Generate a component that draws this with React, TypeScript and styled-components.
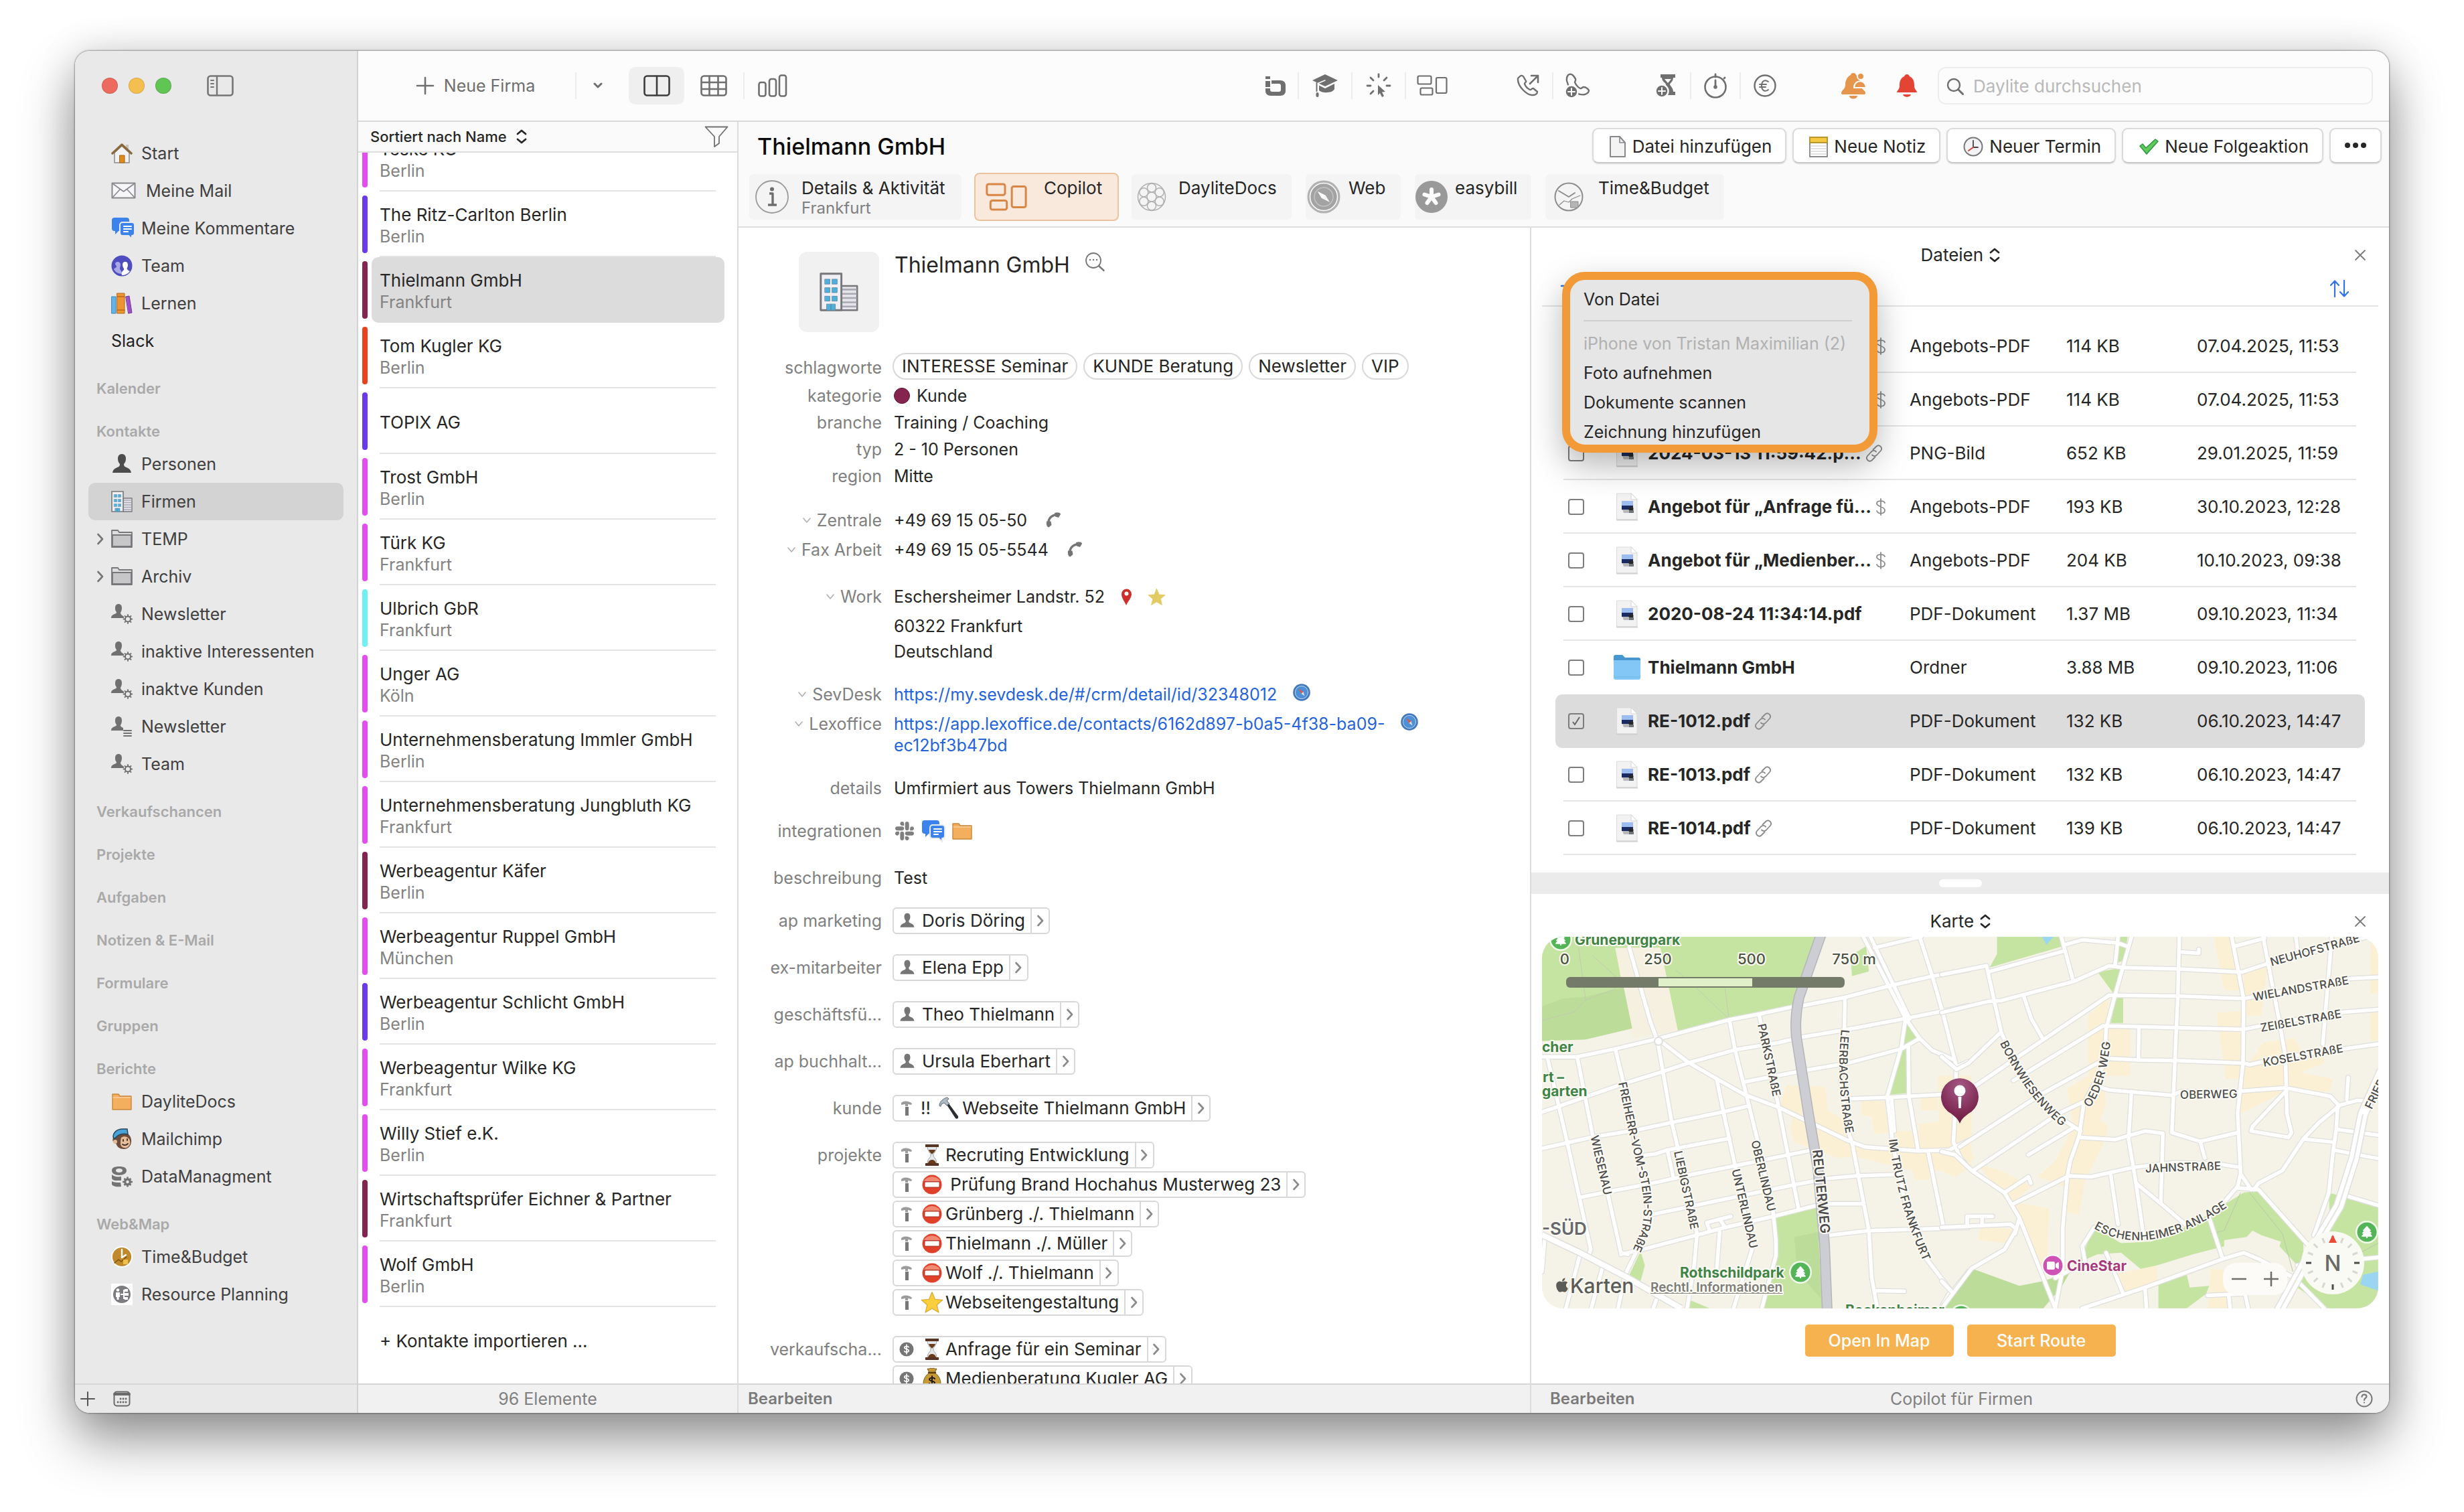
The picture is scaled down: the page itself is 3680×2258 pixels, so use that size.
import React from 'react';
import styled, { createGlobalStyle, css } from 'styled-components';
import { FaApple, FaSlack, FaTree, FaVideo } from 'react-icons/fa6';

const Global = createGlobalStyle`
  * { box-sizing: border-box; }
  body { margin: 0; background: #fff; }
  body, button, input, select, table {
    font-family: Inter, "Liberation Sans", sans-serif;
    font-size: 25px; line-height: 32px; color: #262626;
  }
  button, select, input { border: 0; background: none; padding: 0; margin: 0; }
  svg { display: block; flex: none; }
`;

/* ---------- shared shapes ---------- */

type IconProps = { w: number; h?: number; vb?: string; children: React.ReactNode; color?: string };
const Icon = ({ w, h = w, vb, children, color = '#6f6f6f' }: IconProps) => (
  <svg width={w} height={h} viewBox={vb || `0 0 ${w} ${h}`} fill="none" stroke={color} strokeWidth={3} strokeLinecap="round" strokeLinejoin="round" aria-hidden="true">
    {children}
  </svg>
);

const personPath = 'M16 1c4 0 6 3 6 7 0 3-1 6-3 8 0 3 1 4 4 5 4 2 6 3 7 8H2c1-5 3-6 7-8 3-1 4-2 4-5-2-2-3-5-3-8 0-4 2-7 6-7Z';
const Person = ({ size = 32, color = '#4c4c4c' }) => (
  <Icon w={size} vb="0 0 32 32"><path d={personPath} fill={color} stroke="none" /></Icon>
);
const PersonGear = () => (
  <Icon w={32} vb="0 0 32 32" color="#707070">
    <path d="M11 1c3 0 5 2 5 6 0 3-1 5-2 7 0 3 3 4 5 6v2H0c0-4 3-5 5-6 2-1 3-1 3-3-2-2-2-4-2-6 0-4 2-6 5-6Z" fill="#707070" stroke="none" />
    <circle cx="25" cy="23.500" r="4" strokeWidth="2" />
    <path d="M25 17v2M25 28v2M18.500 23.500h2M29.500 23.500h2M20.500 19l1.200 1.200M28.300 26.800l1.200 1.200M29.500 19l-1.200 1.200M21.700 26.800l-1.200 1.200" strokeWidth="1.800" />
  </Icon>
);
const PersonList = () => (
  <Icon w={32} vb="0 0 32 32" color="#707070">
    <path d="M11 1c3 0 5 2 5 6 0 3-1 5-2 7 0 3 3 3 4 4v4H0c0-4 3-5 5-6 2-1 3-1 3-3-2-2-2-4-2-6 0-4 2-6 5-6Z" fill="#707070" stroke="none" />
    <path d="M19 22h11M19 26h11M19 30h11" strokeWidth="2" />
  </Icon>
);
const Building = ({ size = 32 }) => (
  <Icon w={size} vb="0 0 32 32" color="#77777b">
    <rect x="18" y="11" width="13" height="20" fill="#e4e4ea" strokeWidth="1.400" />
    <path d="M19 14h11M19 17.500h11M19 21h11M19 24.500h11M19 28h11" strokeWidth="1.400" stroke="#a9a9b3" />
    <rect x="1" y="1" width="17" height="30" fill="#f0f0f4" strokeWidth="1.600" />
    <g fill="#4fb0dd" stroke="#5d8ba3" strokeWidth=".5">
      <path d="M4.500 5.500h4v4h-4zM10.500 5.500h4v4h-4zM4.500 12.500h4v4h-4zM10.500 12.500h4v4h-4zM4.500 19.500h4v4h-4zM10.500 19.500h4v4h-4zM6 26h3.500v5H6zM9.500 26H13v5H9.500z" />
    </g>
  </Icon>
);
const Comments = ({ size = 36 }) => (
  <Icon w={size} vb="0 0 36 36">
    <path d="M5 2h18a4 4 0 0 1 4 4v16H11l-5 5v-5H5a4 4 0 0 1-4-4V6a4 4 0 0 1 4-4Z" fill="#3b82ea" stroke="none" />
    <path d="M17 9h14a4 4 0 0 1 4 4v12a4 4 0 0 1-4 4v5l-5-5h-9a4 4 0 0 1-4-4V13a4 4 0 0 1 4-4Z" fill="#3b82ea" stroke="#e9e9e9" strokeWidth="2" />
    <path d="M19 15h11M19 19h11M19 23h6" stroke="#fff" strokeWidth="2.200" />
  </Icon>
);
const Folder = ({ size = 32, fill = '#f3af5e', edge = '#c9873a' }) => (
  <Icon w={size} vb="0 0 32 32" color={edge}>
    <path d="M2 28V5h9l2 3h17v20Z" fill={fill} strokeWidth="1.400" />
    <path d="M3 10h26" strokeWidth="1" stroke="#fff" opacity=".6" />
  </Icon>
);
const OutlineFolder = () => (
  <Icon w={32} vb="0 0 32 32" color="#77777b">
    <path d="M1 28V3h9l2 3h19v22Z" fill="#dedede" strokeWidth="1.800" />
    <path d="M2 10h28v17H2Z" fill="#c6c6c8" strokeWidth="1.800" />
  </Icon>
);
const ChevronRight = ({ w = 10, h = 18, color = '#777' }) => (
  <Icon w={w} h={h} vb="0 0 10 18" color={color}><path d="M1.500 2 8 9l-6.500 7" strokeWidth="2.600" /></Icon>
);
const UpDown = () => (
  <Icon w={16} h={22} vb="0 0 16 22" color="#262626"><path d="m2 7 6-5 6 5M2 15l6 5 6-5" strokeWidth="2.800" /></Icon>
);
const Close = () => (
  <Icon w={18} color="#7a7a7a"><path d="m2 2 14 14M16 2 2 16" strokeWidth="1.800" /></Icon>
);
const Handset = () => (
  <Icon w={22} h={24} vb="0 0 22 24" color="#757575">
    <path d="M4 18C3 10 8 4 17 3.500" strokeWidth="3.400" />
    <path d="M1 13.500h6.500L8.500 19 4.500 22.500C1 22.500.5 17 1 13.500ZM13 1c4-1.500 9-1 9 2l-3 5-5-1.500Z" fill="#757575" stroke="none" />
  </Icon>
);
const Hourglass = ({ w = 28 }) => (
  <Icon w={w} h={34} vb="0 0 28 34">
    <path d="M7 4c0 8 5 9 5 13s-5 5-5 13h14c0-8-5-9-5-13s5-5 5-13Z" fill="#e3e7ea" stroke="#9aa0a5" strokeWidth="1" />
    <path d="M9 9h10c-1 4-4 5-5 7-1-2-4-3-5-7ZM8 29c1-4 4-5 6-5s5 1 6 5Z" fill="#6b3c1c" stroke="none" />
    <path d="M4 1h20v4H4zM4 29h20v4H4z" fill="#5a3423" stroke="none" />
  </Icon>
);
const Stop = () => (
  <Icon w={34} h={32} vb="-2 -1 34 32">
    <circle cx="15" cy="15" r="14.500" fill="#e0412a" stroke="none" />
    <path d="M3 10c4-9 20-9 24 0Z" fill="#f08a72" stroke="none" />
    <rect x="4" y="11" width="22" height="8" rx="1" fill="#fff" stroke="#8d2a1c" strokeWidth=".8" />
  </Icon>
);
const Star = ({ size = 30, fill = '#f9cf3d', edge = '#dca52a' }) => (
  <Icon w={size} vb="0 0 30 30" color={edge}>
    <path d="m15 1.500 4 9.500 10 .8-7.600 6.500 2.400 10L15 23l-8.800 5.300 2.400-10L1 11.800l10-.8Z" fill={fill} strokeWidth="1" />
  </Icon>
);
const HammerColor = () => (
  <Icon w={34} h={34} vb="0 0 34 34">
    <path d="m14 12 3-2 14 19c1 3-2 5-4 3Z" fill="#2b2f33" stroke="none" />
    <path d="M3 13c0-6 6-11 12-12l2 2-3 3 4 4-4 3-4-4-4 2-1 3Z" fill="#aeb9c3" stroke="#5d6a75" strokeWidth="1" />
  </Icon>
);
const MoneyBag = () => (
  <Icon w={34} h={34} vb="-3 0 34 34">
    <path d="M10 8 7 2c3 1 4-2 7 0 3-2 4 1 7 0l-3 6c7 5 9 11 9 17 0 6-4 8-13 8S1 31 1 25c0-6 2-12 9-17Z" fill="#c79a38" stroke="#7c5a17" strokeWidth="1" />
    <path d="M9 8h10" stroke="#5a3f0d" strokeWidth="2.500" />
    <path d="M18 17c-1-2-8-2-8 1s8 2 8 5-7 3-8 1M14 13v14" stroke="#1e1a10" strokeWidth="2" />
  </Icon>
);
const HammerGray = () => (
  <Icon w={22} h={26} vb="0 0 22 24">
    <path d="M3 7V4c4-4 12-3 16 1l-1 2-5-1v3H9V6Z" fill="#9b9b9b" stroke="none" />
    <path d="M9 10h5v13H9Z" fill="#777" stroke="none" />
  </Icon>
);
const Dollar = () => (
  <Icon w={22} vb="0 0 24 24">
    <circle cx="12" cy="12" r="11.500" fill="#757575" stroke="none" />
    <path d="M15.500 8.500c-1-2-7-2-7 .8 0 3 7 2 7 5 0 3-6 3-7 .8M12 4.500v15" stroke="#fff" strokeWidth="1.800" />
  </Icon>
);
const Compass = ({ size = 50, rim = '#b2b2b2', face = '#a3a3a3', needle = '#fff' }) => (
  <Icon w={size} vb="0 0 50 50">
    <circle cx="25" cy="25" r="24.500" fill={rim} stroke="none" />
    <circle cx="25" cy="25" r="20.500" fill={face} stroke="#fff" strokeWidth="1.500" />
    <circle cx="25" cy="25" r="14" stroke="#fff" strokeOpacity=".35" strokeWidth="1.500" />
    <path d="m16 17 12 6 6 10-12-6Z" fill="#f5f5f5" stroke="none" />
    <path d="m16 17 12 6-6 4Z" fill={needle} stroke="none" />
  </Icon>
);
const BrowserMark = () => (
  <Icon w={26} vb="0 0 26 26">
    <circle cx="13" cy="13" r="11.500" fill="#4f8fd6" stroke="#4277ba" strokeWidth="2.600" />
    <circle cx="13" cy="13" r="9.600" stroke="#d5e4f5" strokeWidth=".8" />
    <path d="m8.500 7.500 7 4.500-3 3Z" fill="#e5563f" stroke="none" />
    <path d="m17.500 18.500-5-3.500 3-3Z" fill="#d8dde4" stroke="none" />
  </Icon>
);
const LinkMark = () => (
  <Icon w={26} h={26} vb="0 0 26 26" color="#8a8a8a">
    <path d="m11.500 7.500 5-5c4-3.500 10 2 6.500 6.500l-6 6.500c-2 2-5 2-7 0" strokeWidth="1.800" />
    <path d="m14.500 18.500-5 5c-4 3.500-10-2-6.500-6.500l6-6.500c2-2 5-2 7 0" strokeWidth="1.800" />
  </Icon>
);
const DollarMark = () => (
  <Icon w={16} h={30} vb="0 0 16 30" color="#8a8a8a">
    <path d="M14 9C12 5 2 5 2 10s12 4 12 10-10 6-12 1M8 3v24" strokeWidth="1.800" />
  </Icon>
);
const DocIcon = () => (
  <Icon w={34} h={42} vb="0 0 34 42">
    <path d="M2 1h21l9 9v30H2Z" fill="#f2f2f2" stroke="#d9d9d9" strokeWidth="1" />
    <path d="M23 1v9h9Z" fill="#fff" stroke="#d5d5d5" strokeWidth="1" />
    <path d="M9 12h17v8H9Z" fill="#9dbcf0" stroke="none" />
    <path d="M9 19h17v6H9Z" fill="#1b2b63" stroke="none" />
    <path d="M10 25h11l2 5H12Z" fill="#b8b8b8" stroke="none" />
    <circle cx="23" cy="24" r="3.500" fill="#26282c" stroke="none" />
    <path d="M20 26h7v4h-7Z" fill="#70757c" stroke="none" />
    <path d="M2 40.500h30" stroke="#cfcfcf" strokeWidth="2" />
  </Icon>
);
const BlueFolder = () => (
  <Icon w={40} h={38} vb="0 0 40 38">
    <path d="M0 34V3c0-2 1-3 3-3h10l4 4h20c2 0 3 1 3 3v27Z" fill="#4697cf" stroke="none" />
    <path d="M0 8h40v26c0 2-1 3-3 3H3c-2 0-3-1-3-3Z" fill="#82c7f5" stroke="none" />
    <path d="M1 33h38" stroke="#6eb6e6" strokeWidth="1" />
  </Icon>
);
const Copilot = ({ w = 46, h = 31, color = '#6f6f6f' }) => (
  <Icon w={w} h={h} vb="0 0 46 31" color={color}>
    <rect x="1.500" y="1.500" width="20" height="12" rx="2" strokeWidth="2.200" />
    <rect x="5.500" y="19.500" width="18" height="10" rx="2" strokeWidth="2.200" />
    <rect x="29" y="4" width="15.500" height="23" rx="2" strokeWidth="2.200" />
  </Icon>
);
const PlusBadge = ({ x, y }: { x: number; y: number }) => (
  <g>
    <circle cx={x} cy={y} r="9.500" fill="#6f6f6f" stroke="#fcfcfc" strokeWidth="2.500" />
    <path d={`M${x - 5} ${y}h10M${x} ${y - 5}v10`} stroke="#fff" strokeWidth="2" />
  </g>
);

/* ---------- window frame ---------- */

const Desktop = styled.main`
  height: 100vh;
  min-height: 1200px;
  padding: 76px 112px 148px;
  overflow: hidden;
`;
const Window = styled.div`
  height: 100%;
  display: grid;
  grid-template-columns: 423px minmax(0, 1fr);
  border-radius: 22px;
  overflow: hidden;
  background: #fff;
  box-shadow: 0 0 2px 1px rgba(0, 0, 0, 0.35), 0 40px 80px rgba(0, 0, 0, 0.42), 0 0 60px rgba(0, 0, 0, 0.12);
`;
const Footer = styled.footer<{ $left?: number }>`
  flex: none;
  height: 44px;
  border-top: 2px solid #d6d6d6;
  background: #f1f1f1;
  display: grid;
  grid-template-columns: 1fr auto 1fr;
  align-items: center;
  padding: 0 24px 0 ${p => p.$left || 14}px;
  color: #808080;
`;
const FootButton = styled.button`
  justify-self: start;
  font-size: 24px;
  font-weight: 600;
  color: #7a7a7a;
`;
const FootHelp = styled.button`
  justify-self: end;
`;

/* ---------- sidebar ---------- */

const Sidebar = styled.aside`
  display: flex;
  flex-direction: column;
  min-height: 0;
  background: #e9e9e9;
  border-right: 2px solid #d2d2d2;
`;
const Lights = styled.div`
  height: 125px;
  flex: none;
  display: flex;
  gap: 16px;
  padding: 36px 0 0 40px;
  align-items: flex-start;
`;
const Light = styled.button<{ $c: string }>`
  width: 24px;
  height: 24px;
  margin-top: 4px;
  border-radius: 50%;
  background: ${p => p.$c};
  box-shadow: inset 0 0 0 1px rgba(0, 0, 0, 0.12);
`;
const PanelToggle = styled.button`
  margin-left: 37px;
`;
const SideNav = styled.nav`
  flex: 1;
  min-height: 0;
  overflow: hidden;
`;
const SideHeading = styled.h2`
  margin: 0;
  height: 64px;
  padding: 22px 0 0 32px;
  font-size: 22px;
  line-height: 42px;
  font-weight: 600;
  color: #a9a9a9;
`;
const SideItem = styled.a<{ $on?: boolean; $plain?: boolean }>`
  height: 56px;
  margin: 0 20px;
  padding: 0 13px;
  display: flex;
  align-items: center;
  white-space: pre;
  border-radius: 10px;
  text-decoration: none;
  color: ${p => (p.$plain ? '#1f1f1f' : '#404040')};
  background: ${p => (p.$on ? '#d3d3d3' : 'transparent')};
`;
const SideArrow = styled.span`
  width: 21px;
  flex: none;
`;
const SideIcon = styled.span`
  width: 45px;
  flex: none;
`;
const SideFooter = styled(Footer)`
  background: #e9e9e9;
  display: flex;
  padding: 0 8px;
  gap: 27px;
`;

type Side = { t: string; icon?: React.ReactNode; on?: boolean; arrow?: boolean };
const sideStart: Side[] = [
  { t: 'Start', icon: (
    <Icon w={32}><path d="M5 15v15h22V15L16 5Z" fill="#f2f2f2" stroke="#8b8b8b" strokeWidth="1.500" /><path d="M22 3h4v8h-4Z" fill="#c9c1b4" stroke="none" /><path d="M13 19h7v11h-7Z" fill="#e08a1e" stroke="#a8640f" strokeWidth="1" /><path d="M2 16 16 3l14 13" stroke="#8a6a3c" strokeWidth="3.500" /></Icon>) },
  { t: ' Meine Mail', icon: (
    <Icon w={38} h={26}><rect x="1.500" y="1.500" width="34" height="22" fill="#f6f6f8" stroke="#88888d" strokeWidth="2" /><path d="m2 2 16.500 12L35 2M2 23l11-12M35 23 24 11" stroke="#88888d" strokeWidth="1.600" /></Icon>) },
  { t: 'Meine Kommentare', icon: <Comments /> },
  { t: 'Team', icon: (
    <Icon w={32}><circle cx="16" cy="16" r="15.500" fill="#4f4cc0" stroke="none" /><path d="M10 10c2 0 4 2 4 4s-1 4-1 6 3 3 3 8c-6 0-10-3-12-7 1-2 4-2 4-4s-2-2-2-4 2-3 4-3Z" fill="#a9a8e6" stroke="none" /><path d="M21 10c3 0 4 2 4 5s-2 4-1 6 3 2 4 3c-3 4-7 6-12 6-1-3 0-6 3-8 1-2-2-4-2-7s1-5 4-5Z" fill="#fff" stroke="none" /></Icon>) },
  { t: 'Lernen', icon: (
    <Icon w={32}><path d="M1 6h6v25H1Z" fill="#63b3e4" stroke="#3d88b8" strokeWidth="1" /><path d="M9 1h11v30H9Z" fill="#eb9431" stroke="#b8691a" strokeWidth="1" /><path d="M9 6h11M9 26h11" stroke="#b8691a" strokeWidth="1.500" /><path d="m22 6 5-1 4 25-5 1Z" fill="#9b52c8" stroke="#733796" strokeWidth="1" /></Icon>) },
  { t: 'Slack' },
];
const sideContacts: Side[] = [
  { t: 'Personen', icon: <Person /> },
  { t: 'Firmen', icon: <Building />, on: true },
  { t: 'TEMP', icon: <OutlineFolder />, arrow: true },
  { t: 'Archiv', icon: <OutlineFolder />, arrow: true },
  { t: 'Newsletter', icon: <PersonGear /> },
  { t: 'inaktive Interessenten', icon: <PersonGear /> },
  { t: 'inaktve Kunden', icon: <PersonGear /> },
  { t: 'Newsletter', icon: <PersonList /> },
  { t: 'Team', icon: <PersonGear /> },
];
const sideReports: Side[] = [
  { t: 'DayliteDocs', icon: <Folder /> },
  { t: 'Mailchimp', icon: (
    <Icon w={32}><path d="M9 8c-5 2-8 8-6 12 1 3 4 2 5 4 1 4 5 7 11 7 7 0 12-6 11-14-1-7-6-11-12-11-4 0-6 1-9 2Z" fill="#6d4c3b" stroke="none" /><path d="M15 14c4-3 9-2 12 2 3 5 1 11-4 13-5 1-9-2-9-6 0-3 0-6 1-9Z" fill="#e6bd99" stroke="none" /><circle cx="6" cy="20" r="3" fill="#e6bd99" stroke="none" /><path d="M3 13C3 6 9 1 17 1h7l1 8c-8-2-15 0-20 7Z" fill="#4aa3d8" stroke="#27465a" strokeWidth="1.500" /><path d="M18 17v2M24 16v2M17 24c3 2 6 1 8-1" stroke="#3a2a20" strokeWidth="1.800" /></Icon>) },
  { t: 'DataManagment', icon: (
    <Icon w={32}><g fill="#737373" stroke="none"><path fillRule="evenodd" d="M12 1c7 0 11 2 11 6s-4 7-11 7S1 11 1 7s4-6 11-6Zm0 3C9 4 7 5 7 7s2 3 5 3 5-1 5-3-2-3-5-3ZM1 13c3 3 8 4 14 3v6H8c-5 0-7-2-7-4ZM1 23c3 2 8 2 13 2l1 6c-8 1-14-1-14-4Z" /><circle cx="24.500" cy="24" r="5.500" /></g><path d="M24.500 16.500v15M17 24h15M19.500 19l10 10M29.500 19l-10 10" stroke="#737373" strokeWidth="2.600" strokeLinecap="butt" /><circle cx="24.500" cy="24" r="2.200" fill="#e9e9e9" stroke="none" /></Icon>) },
];
const sideWeb: Side[] = [
  { t: 'Time&Budget', icon: (
    <Icon w={32}><circle cx="16" cy="16" r="15" fill="#c08a2c" stroke="#fff" strokeWidth="1.800" /><path d="M16 5v12l6-4" stroke="#fff" strokeWidth="2.400" /><path d="m5 25 6-5 4 3 8-7" stroke="#7c5008" strokeWidth="1.500" /><path d="M18 20h7v7h-7Z" fill="#efc14b" stroke="none" /></Icon>) },
  { t: 'Resource Planning', icon: (
    <Icon w={32}><path d="M0 0h32v32H0Z" fill="#fff" stroke="none" /><circle cx="16" cy="16" r="13" fill="#7c7c80" stroke="none" /><circle cx="10" cy="9.500" r="2.300" fill="#fff" stroke="none" /><path d="M7 13h6v7h-1.500v4h-3v-4H7ZM14 15h4v2h-4zM18 9h2v14h-2zM20 8h5v4h-5zM20 14h6v4h-6zM20 20h5v4h-5z" fill="#fff" stroke="none" /></Icon>) },
];

const SideGroup = ({ items }: { items: Side[] }) => (
  <>
    {items.map((s, i) => (
      <SideItem key={i} href="#" $on={s.on} $plain={!s.icon}>
        <SideArrow>{s.arrow && <ChevronRight />}</SideArrow>
        {s.icon && <SideIcon>{s.icon}</SideIcon>}
        {s.t}
      </SideItem>
    ))}
  </>
);

/* ---------- toolbar ---------- */

const Main = styled.div`
  display: flex;
  flex-direction: column;
  min-width: 0;
  min-height: 0;
`;
const Toolbar = styled.header`
  flex: none;
  height: 106px;
  padding: 0 24px 1px 0;
  display: flex;
  align-items: center;
  background: #fcfcfc;
  border-bottom: 2px solid #d9d9d9;
`;
const Tool = styled.button<{ $w: number; $on?: boolean }>`
  width: ${p => p.$w}px;
  height: 56px;
  display: flex;
  flex: none;
  align-items: center;
  justify-content: center;
  border-radius: 10px;
  background: ${p => (p.$on ? '#efefef' : 'transparent')};
`;
const NewTool = styled(Tool)`
  gap: 14px;
  padding-left: 26px;
  color: #6e6e6e;
`;
const Rule = styled.span`
  width: 2px;
  height: 40px;
  flex: none;
  background: #ececec;
`;
const Gap = styled.span<{ $w?: number }>`
  ${p => (p.$w ? css`flex: none; width: ${p.$w}px;` : css`flex: 1;`)}
`;
const Search = styled.label`
  width: 650px;
  height: 56px;
  display: flex;
  align-items: center;
  gap: 14px;
  padding: 3px 11px 0;
  border: 2px solid #ededed;
  border-radius: 12px;
  input {
    flex: 1;
    min-width: 0;
    outline: none;
    font-size: 26px;
  }
  input::placeholder {
    color: #b9b9b9;
    opacity: 1;
  }
`;

/* ---------- company list ---------- */

const Body = styled.div`
  flex: 1;
  min-height: 0;
  display: flex;
`;
const ListPane = styled.section`
  width: 568px;
  flex: none;
  display: flex;
  flex-direction: column;
  border-right: 2px solid #dcdcdc;
`;
const ListHeader = styled.div`
  height: 46px;
  flex: none;
  display: flex;
  align-items: center;
  justify-content: space-between;
  padding: 0 13px 0 18px;
  background: #fafafa;
  border-bottom: 2px solid #dedede;
`;
const Picker = styled.label<{ $size?: number; $gap?: number }>`
  display: inline-flex;
  align-items: center;
  gap: ${p => p.$gap || 8}px;
  select {
    appearance: none;
    font-size: ${p => p.$size || 26}px;
    font-weight: ${p => (p.$size ? 500 : 400)};
  }
`;
const ListScroll = styled.ul`
  flex: 1;
  min-height: 0;
  overflow: hidden;
  margin: 0;
  padding: 0;
  list-style: none;
  font-size: 26px;
  li:first-child { margin-top: -40px; }
`;
const Company = styled.li<{ $c: string; $on?: boolean }>`
  height: 98px;
  display: flex;
  padding: 6px 19px 6px 6px;
  background: ${p => (p.$on ? 'none' : 'linear-gradient(#e4e4e4, #e4e4e4) 32px 100% / calc(100% - 64px) 2px no-repeat')};
  &::before {
    content: '';
    width: 8px;
    height: 86px;
    flex: none;
    border-radius: 4px;
    background: ${p => p.$c};
  }
`;
const CompanyCard = styled.a<{ $on?: boolean }>`
  flex: 1;
  margin: -6px 0 -6px 6px;
  padding: 4px 12px 0;
  display: flex;
  flex-direction: column;
  justify-content: center;
  white-space: nowrap;
  border-radius: 10px;
  text-decoration: none;
  color: #262626;
  background: ${p => (p.$on ? '#dcdcdc' : 'transparent')};
`;
const City = styled.span`
  font-size: 25px;
  color: #838383;
`;
const ImportRow = styled.li`
  height: 98px;
  display: flex;
  align-items: center;
  padding: 4px 0 0 32px;
  button { font-size: 26px; }
`;

const P = '#e64df0', V = '#6a39ec', M = '#85244f';
const companies: [string, string, string][] = [
  ['Teske KG', 'Berlin', P], ['The Ritz-Carlton Berlin', 'Berlin', V], ['Thielmann GmbH', 'Frankfurt', M],
  ['Tom Kugler KG', 'Berlin', '#e8421f'], ['TOPIX AG', '', V], ['Trost GmbH', 'Berlin', P], ['Türk KG', 'Frankfurt', P],
  ['Ulbrich GbR', 'Frankfurt', '#6ff0f4'], ['Unger AG', 'Köln', P], ['Unternehmensberatung Immler GmbH', 'Berlin', P],
  ['Unternehmensberatung Jungbluth KG', 'Frankfurt', P], ['Werbeagentur Käfer', 'Berlin', M],
  ['Werbeagentur Ruppel GmbH', 'München', P], ['Werbeagentur Schlicht GmbH', 'Berlin', V],
  ['Werbeagentur Wilke KG', 'Frankfurt', P], ['Willy Stief e.K.', 'Berlin', P],
  ['Wirtschaftsprüfer Eichner & Partner', 'Frankfurt', M], ['Wolf GmbH', 'Berlin', P],
];

/* ---------- detail header ---------- */

const Detail = styled.div`
  flex: 1;
  min-width: 0;
  display: flex;
  flex-direction: column;
`;
const DetailHeader = styled.div`
  flex: none;
  height: 158px;
  padding: 0 11px 0 14px;
  background: #fafafa;
  border-bottom: 2px solid #dedede;
`;
const TitleRow = styled.div`
  height: 76px;
  display: flex;
  align-items: center;
  gap: 9px;
  padding-bottom: 6px;
`;
const Title = styled.h1`
  flex: 1;
  margin: 0;
  padding: 4px 0 0 14px;
  font-size: 34px;
  line-height: 40px;
  font-weight: 500;
  color: #0b0b0b;
`;
const Action = styled.button`
  height: 53px;
  display: flex;
  align-items: center;
  gap: 9px;
  padding: 4px 20px 0 23px;
  font-size: 26px;
  background: #fff;
  border: 2px solid #dadada;
  border-bottom-color: #c9c9c9;
  border-radius: 9px;
  box-shadow: 0 1px 2px rgba(0, 0, 0, 0.12);
`;
const MoreAction = styled(Action)`
  width: 78px;
  padding: 0;
  justify-content: center;
`;
const Tabs = styled.nav`
  display: flex;
  gap: 17px;
`;
const Tab = styled.button<{ $w: number; $icon: number; $on?: boolean }>`
  width: ${p => p.$w}px;
  height: 72px;
  display: grid;
  grid-template-columns: ${p => p.$icon}px 1fr;
  align-items: center;
  text-align: left;
  border-radius: 8px;
  border: 2px solid ${p => (p.$on ? '#ecc29d' : 'transparent')};
  background: ${p => (p.$on ? '#f9e9dd' : '#f4f4f4')};
  background-clip: ${p => (p.$on ? 'border-box' : 'padding-box')};
`;
const TabIcon = styled.span`
  display: flex;
  justify-content: center;
  padding-right: 10px;
`;
const TabText = styled.span`
  align-self: start;
  display: flex;
  flex-direction: column;
  padding-top: 5px;
  font-size: 26px;
  white-space: nowrap;
`;
const TabSub = styled.span`
  font-size: 24px;
  line-height: 28px;
  color: #808080;
`;

/* ---------- detail middle ---------- */

const Panes = styled.div`
  flex: 1;
  min-height: 0;
  display: flex;
`;
const InfoPane = styled.section`
  flex: 1183 1 0;
  min-width: 0;
  display: flex;
  flex-direction: column;
  border-right: 2px solid #dcdcdc;
`;
const InfoScroll = styled.div`
  flex: 1;
  min-height: 0;
  overflow: hidden;
`;
const Hero = styled.div`
  height: 187px;
  padding: 36px 0 0 90px;
  display: flex;
  gap: 23px;
`;
const Avatar = styled.div`
  width: 120px;
  height: 120px;
  display: grid;
  place-items: center;
  border-radius: 12px;
  background: #f1f1f1;
`;
const HeroName = styled.h2`
  margin: 0;
  display: flex;
  align-items: flex-start;
  gap: 22px;
  font-size: 32px;
  line-height: 40px;
  font-weight: 400;
`;
const Field = styled.div<{ $h?: number; $top?: number }>`
  display: grid;
  grid-template-columns: 214px 1fr;
  column-gap: 18px;
  padding-top: ${p => p.$top || 0}px;
  --line: ${p => p.$h || 44}px;
`;
const Label = styled.span`
  height: var(--line);
  display: flex;
  align-items: center;
  justify-content: flex-end;
  gap: 9px;
  white-space: nowrap;
  color: #808080;
`;
const Values = styled.div`
  display: flex;
  flex-direction: column;
  align-items: flex-start;
`;
const Value = styled.div<{ $gap?: number }>`
  min-height: var(--line);
  display: flex;
  align-items: center;
  gap: ${p => p.$gap || 18}px;
`;
const ShortValue = styled(Value)`
  min-height: 32px;
`;
const LinkValue = styled(Value)`
  align-items: flex-start;
  padding: 6px 0;
`;
const Anchor = styled.a`
  color: #2463dc;
  text-decoration: none;
`;
const Pills = styled.div`
  display: flex;
  gap: 9px;
  margin-left: -2px;
`;
const Pill = styled.span`
  height: 40px;
  padding: 0 12px;
  font-size: 26px;
  line-height: 36px;
  border: 2px solid #d8d8d8;
  border-radius: 20px;
`;
const Dot = styled.span`
  width: 24px;
  height: 24px;
  margin-right: -8px;
  border-radius: 50%;
  background: #85244f;
  border: 1px solid #5e1537;
`;
const Chip = styled.button`
  height: 40px;
  margin: 2px 0 2px -2px;
  display: flex;
  align-items: stretch;
  border: 2px solid #d8d8d8;
  border-radius: 6px;
`;
const ChipMain = styled.span`
  display: flex;
  align-items: center;
  padding: 0 8px;
  gap: 10px;
`;
const ChipText = styled.span`
  display: flex;
  align-items: center;
  gap: 3px;
  white-space: pre;
  font-size: 26px;
`;
const ChipGo = styled.span`
  width: 27px;
  display: grid;
  place-items: center;
  border-left: 2px solid #d8d8d8;
`;

const Linked = ({ icon, pre, emoji, t }: { icon: React.ReactNode; pre?: string; emoji?: React.ReactNode; t: string }) => (
  <Chip>
    <ChipMain>{icon}<ChipText>{pre}{emoji}<span>{t}</span></ChipText></ChipMain>
    <ChipGo><ChevronRight w={10} h={18} color="#8a8a8a" /></ChipGo>
  </Chip>
);
const Disclosure = () => <Icon w={12} h={8} color="#b0b0b0"><path d="m1 1 5 6 5-6" strokeWidth="1.600" /></Icon>;
const personChip = <Person size={24} color="#757575" />;

/* ---------- right pane ---------- */

const SidePane = styled.section`
  position: relative;
  flex: 1282 1 0;
  min-width: 0;
  display: flex;
  flex-direction: column;
`;
const PaneTitle = styled.div<{ $h: number; $top?: number }>`
  height: ${p => p.$h}px;
  flex: none;
  display: grid;
  grid-template-columns: 1fr auto 1fr;
  align-items: center;
  padding: ${p => p.$top || 0}px 34px 0;
  > button { justify-self: end; }
  > label { grid-column: 2; }
`;
const FileTools = styled.div`
  height: 36px;
  flex: none;
  margin: 0 16px;
  padding: 0 43px 0 27px;
  display: flex;
  justify-content: space-between;
  align-items: flex-start;
  border-bottom: 2px solid #e4e4e4;
`;
const SortButton = styled.button`
  margin-top: -4px;
`;
const FileTable = styled.table`
  display: block;
  margin: 19px 36px 26px;
  border-spacing: 0;
  font-size: 26px;
  tbody { display: block; }
`;
const FileRow = styled.tr<{ $on?: boolean; $line?: boolean }>`
  height: 80px;
  display: grid;
  grid-template-columns: 75px minmax(0, 1fr) 234px 195px 251px;
  align-items: center;
  border-radius: 10px;
  background: ${p => (p.$on ? '#dcdcdc' : p.$line ? 'linear-gradient(#e4e4e4, #e4e4e4) 12px 100% / calc(100% - 25px) 2px no-repeat' : 'none')};
  td { padding: 0; white-space: nowrap; }
`;
const NameCell = styled.td`
  display: flex;
  align-items: center;
  font-weight: 700;
`;
const FileIcon = styled.span`
  width: 63px;
  flex: none;
  display: grid;
  place-items: center;
`;
const FileName = styled.span<{ $cut?: boolean }>`
  white-space: nowrap;
  margin-right: 6px;
  ${p => p.$cut && css`width: 334px;`}
`;
const Check = styled.input`
  appearance: none;
  display: block;
  width: 24px;
  height: 24px;
  margin: 0 0 0 19px;
  border: 2px solid #7d7d7d;
  border-radius: 4px;
  &:checked {
    background: url("data:image/svg+xml,%3Csvg xmlns='http://www.w3.org/2000/svg' viewBox='0 0 20 20'%3E%3Cpath d='m5 11 3 4 7-11' fill='none' stroke='%23666' stroke-width='2'/%3E%3C/svg%3E") center / 20px no-repeat;
  }
`;
const Splitter = styled.div`
  height: 32px;
  flex: none;
  display: grid;
  place-items: center;
  background: #ebebeb;
  &::before {
    content: '';
    width: 64px;
    height: 12px;
    border-radius: 6px;
    background: #fff;
  }
`;
const Menu = styled.div`
  position: absolute;
  left: 46px;
  top: 66px;
  width: 471px;
  height: 270px;
  padding: 7px 20px 0;
  border: 12px solid #f29a38;
  border-radius: 34px;
  background: #e6e6e6;
  box-shadow: 0 20px 50px rgba(0, 0, 0, 0.28);
`;
const MenuItem = styled.button<{ $dim?: boolean }>`
  display: block;
  height: 44px;
  white-space: nowrap;
  color: ${p => (p.$dim ? '#b1b1b1' : '#262626')};
`;
const MenuRule = styled.hr`
  height: 2px;
  margin: 9px 6px 11px 0;
  border: 0;
  background: #cfcfcf;
`;
const MapBox = styled.div`
  position: relative;
  flex: 1;
  min-height: 0;
  margin: 0 16px;
  overflow: hidden;
  border-radius: 32px;
  background: #f5f3e8;
  > svg { width: 100%; height: 100%; }
`;
const Zoom = styled.div`
  position: absolute;
  right: 136px;
  bottom: 20px;
  width: 96px;
  height: 48px;
  display: grid;
  grid-template-columns: 1fr 1fr;
  place-items: center;
  border-radius: 20px;
  background: #fcfbf7;
`;
const MapActions = styled.div`
  flex: none;
  display: flex;
  justify-content: center;
  gap: 20px;
  padding: 24px 0 40px;
`;
const MapButton = styled.button`
  width: 222px;
  height: 48px;
  border-radius: 5px;
  background: #f6b24f;
  color: #fff;
  font-weight: 500;
`;

const files: { n: string; mark?: 'd' | 'l'; cut?: boolean; type: string; size: string; date: string; dir?: boolean; on?: boolean; line?: boolean }[] = [
  { n: '', mark: 'd', cut: true, type: 'Angebots-PDF', size: '114 KB', date: '07.04.2025, 11:53', line: true },
  { n: '', mark: 'd', cut: true, type: 'Angebots-PDF', size: '114 KB', date: '07.04.2025, 11:53', line: true },
  { n: '2024-03-13 11:59:42.p...', mark: 'l', type: 'PNG-Bild', size: '652 KB', date: '29.01.2025, 11:59', line: true },
  { n: 'Angebot für „Anfrage fü...', mark: 'd', cut: true, type: 'Angebots-PDF', size: '193 KB', date: '30.10.2023, 12:28', line: true },
  { n: 'Angebot für „Medienber...', mark: 'd', cut: true, type: 'Angebots-PDF', size: '204 KB', date: '10.10.2023, 09:38', line: true },
  { n: '2020-08-24 11:34:14.pdf', type: 'PDF-Dokument', size: '1.37 MB', date: '09.10.2023, 11:34', line: true },
  { n: 'Thielmann GmbH', type: 'Ordner', size: '3.88 MB', date: '09.10.2023, 11:06', dir: true },
  { n: 'RE-1012.pdf', mark: 'l', type: 'PDF-Dokument', size: '132 KB', date: '06.10.2023, 14:47', on: true },
  { n: 'RE-1013.pdf', mark: 'l', type: 'PDF-Dokument', size: '132 KB', date: '06.10.2023, 14:47', line: true },
  { n: 'RE-1014.pdf', mark: 'l', type: 'PDF-Dokument', size: '139 KB', date: '06.10.2023, 14:47', line: true },
];

/* ---------- city map ---------- */

const westRoads = [
  'M55 420 180 420 315 395 470 362 540 345 720 303 825 285 945 262 980 258 1130 232 1290 195 1440 165 1568 145',
  'M365 75 395 170 440 310 465 370 515 625 540 720 605 980 595 1080 570 1216',
  'M475 370 570 435 675 490 775 540 895 580 1000 625 1140 685 1200 705 1390 718 1500 715 1568 685',
  'M55 595 120 575 215 545 345 505 480 468 580 438 740 398 895 375 975 358 1130 335 1350 298 1480 275 1568 258',
  'M55 710 145 692 230 675 400 650 520 627 695 595 790 575',
  'M770 500 975 465 1140 440 1330 395 1395 362',
  'M415 732 455 728 500 715 720 678',
  'M190 865 300 845 420 825 600 790 740 765 920 732 1015 715',
  'M440 920 600 890 760 860 950 825 1070 805 1170 797 1300 793',
  'M335 1045 410 1030 600 985 705 960 875 925 1030 890',
  'M1075 985 1215 970 1400 965 1568 960',
  'M1130 232 1128 335 1115 500 1145 665 1155 690 1215 970 1225 1120 1245 1216',
  'M720 303 740 398 780 540 820 685 875 910 885 1000 885 1050 835 1216',
  'M825 285 895 580 965 900',
  'M675 490 700 600 740 765 800 1030 735 1216',
  'M180 420 235 670 290 860 335 1040 360 1045',
  'M75 425 145 692 228 1030 222 1045',
  'M315 395 345 505 400 760 430 900 410 1000 350 1110 325 1216',
  'M500 715 520 797',
  'M190 1045 140 1216M270 1085 230 1216M460 1190 450 1216',
  'M65 990 55 1100M685 975 675 1095',
  'M725 925 640 945 650 970M690 940 705 960',
  'M1195 40 1345 298 1395 362 1440 400 1520 430M1220 40 1360 300',
  'M1395 40 1440 165 1480 290 1525 450 1520 600 1515 690 1540 740 1568 770',
  'M1345 300 1330 390 1280 545 1300 700 1340 870 1420 1060 1510 1165 1568 1100M1500 1170 1470 1216',
  'M1145 553 1300 548 1560 535',
  'M1355 385 1357 545 1390 718M1425 720 1480 960',
  'M1235 75 1400 40M1235 1160 1340 1162M1070 885 1195 885M1295 550 1305 655',
  'M1520 455 1568 435',
];
const eastRoads = [
  'M0 160 150 132 175 240 200 345 250 450 340 580 465 655',
  'M160 150 410 85M400 40 440 180M415 65 470 50 590 60 620 70',
  'M0 280 155 245 200 242 440 182 560 132 610 138 790 142 1005 152 1090 125 1280 80 1460 30',
  'M100 520 560 225 790 228 1010 236 1130 215 1370 172 1460 168',
  'M240 495 540 322 660 325 790 328 1010 333 1130 310 1350 278 1460 270',
  'M60 705 330 540 550 425 660 430 780 432 1010 440 1030 445 1150 420 1460 380',
  'M105 780 390 600 480 560M290 730 440 645',
  'M275 230 300 300 335 358M195 345 90 440 50 460 0 420',
  'M635 40 580 225 550 330 545 440 475 570 460 670 430 750 420 800 405 960 405 1090 380 1216M590 40 580 130',
  'M795 40 790 230 785 330 770 660 865 688 990 660M660 325 658 425',
  'M525 515 560 525 770 542 800 530 985 530 1150 518 1300 545 1330 575 1260 630 1210 680 1140 780 1060 820 1045 840',
  'M635 530 625 680 650 820 675 985',
  'M460 675 580 682 680 655 740 662 733 880M865 688 880 740',
  'M240 885 425 797 500 800 640 770 780 755 930 760 1000 770',
  'M565 790 590 950M650 820 740 890 815 950',
  'M970 40 1010 236 1008 440 990 600 1000 790 990 830 945 880M1000 790 1035 840',
  'M1075 40 1130 310 1150 420 1155 600 1170 660 1160 675 1035 655 1040 640 1150 530',
  'M1305 40 1275 380M1185 40 1190 80M980 70 1080 45M795 88 860 92 860 80',
  'M0 720 45 730 100 780 210 850 260 930 340 1120 380 1216',
  'M0 960 230 950 250 965 210 1030 100 1090 0 1216M260 930 245 980',
  'M85 950 85 925 170 925M135 925 135 950M210 850 290 800 298 820',
  'M1210 680 1310 690M1325 575 1320 650 1310 715 1295 850 1245 985',
  'M1325 575 1390 558 1440 560M1325 650 1460 668M1310 715 1460 742M1360 485 1355 555',
  'M1355 860 1460 890M1060 840 1230 1020M990 835 1060 840',
  'M380 1120 480 1070 470 1020 510 960',
  'M470 1216 680 1150 940 1060 1010 1040 1060 1060 1180 1120 1280 1216',
  'M895 930 940 1060M550 1040 605 1165M680 1150 685 1216M890 1175 1010 1170M960 1175 965 1216M1015 1170 1025 1216',
  'M1460 1055 1190 1080M0 1130 35 1165',
];
const west = 'matrix(.4209 0 0 .4719 -23.150 -19)';
const east = 'matrix(.4464 0 0 .4719 597 -19)';

const Streets = ({ roads, transform }: { roads: string[]; transform: string }) => (
  <g transform={transform} fill="none" strokeLinecap="round" strokeLinejoin="round">
    {roads.map(d => <path key={d} d={d} stroke="#dfdfdd" strokeWidth="8" vectorEffect="non-scaling-stroke" />)}
    {roads.map(d => <path key={'w' + d} d={d} stroke="#fff" strokeWidth="5.500" vectorEffect="non-scaling-stroke" />)}
  </g>
);

const streetNames: [string, string, number?][] = [
  ['PARKSTRAßE', 'M328 130 352 244'],
  ['LEERBACHSTRAßE', 'M453 139Q444 220 463 310'],
  ['FREIHERR-VOM-STEIN-STRAßE', 'M120 217 135 288 152 358Q164 410 152 445L132 490'],
  ['WIESENAU', 'M78 297 102 400'],
  ['LIEBIGSTRAßE', 'M203 320 231 450'],
  ['UNTERLINDAU', 'M289 347 320 480'],
  ['OBERLINDAU', 'M318 304 347 425'],
  ['REUTERWEG', 'M410 318 423 450', 20],
  ['IM TRUTZ FRANKFURT', 'M524 302Q536 400 583 500'],
  ['BORNWIESENWEG', 'M689 156Q735 250 796 290'],
  ['OEDER WEG', 'M813 252Q838 220 844 145'],
  ['OBERWEG', 'M953 236 1060 234'],
  ['NEUHOFSTRAßE', 'M1088 38 1240 -4'],
  ['WIELANDSTRAßE', 'M1062 90 1230 60'],
  ['ZEIßELSTRAßE', 'M1073 136 1220 110'],
  ['KOSELSTRAßE', 'M1077 188 1230 160'],
  ['JAHNSTRAßE', 'M901 346 1040 341'],
  ['ESCHENHEIMER ANLAGE', 'M827 430Q910 480 1040 385'],
  ['FRIEDBERGER', 'M1234 256 1290 140'],
];
const halo = { paintOrder: 'stroke' as const, stroke: '#fbfaf3', strokeWidth: 4, strokeLinejoin: 'round' as const };
const ParkBadge = ({ x, y }: { x: number; y: number }) => (
  <g transform={`translate(${x} ${y})`}>
    <circle r="17" fill="#fff" opacity=".8" />
    <circle r="14.500" fill="#53b558" />
    <g transform="translate(-9 -9)"><FaTree size={18} color="#fff" /></g>
  </g>
);

const CityMap = () => (
  <svg viewBox="0 0 1249 555" preserveAspectRatio="xMidYMid slice" role="img" aria-label="Karte" fontFamily="Inter, sans-serif">
    <defs>
      <radialGradient id="pin" cx=".5" cy=".2" r=".8"><stop offset="0" stopColor="#a65a86" /><stop offset="1" stopColor="#6d173f" /></radialGradient>
    </defs>
    <rect width="1249" height="555" fill="#f5f3e8" />
    <g transform={west}>
      <path fill="#c6e4a1" d="M55 40H1045L1020 60 945 262 720 303 537 338 475 75 365 75 390 170 315 75 375 330 210 365 55 370ZM1150 100 1205 70 1215 150 1155 165ZM1290 540 1320 400 1350 385 1347 535ZM1345 300 1390 362 1330 385ZM878 930 1030 895 1050 1216 830 1216 885 1050ZM365 1110 405 1035 420 1080 405 1130ZM580 1190 650 1216 575 1216Z" />
      <path fill="#f5f0e0" d="M315 75 475 75 537 338 375 362Z" />
      <path fill="#bcdd99" d="M55 260 130 235 210 230 345 200 375 330 210 365 55 370ZM950 990 1035 975 1045 1185 960 1100Z" />
      <path fill="none" stroke="#c3c6b4" strokeWidth="2" d="M185 75 210 240 315 205 315 165 235 100M55 305 170 278 210 240M530 145 600 200 718 300M705 205 718 300" />
      <path fill="#fbf0d4" d="M920 510 1060 515 1070 590 1130 620 1150 700 1175 735 1105 740 950 690 935 650 945 615 900 580ZM1190 560 1270 560 1285 660 1235 665 1225 610 1190 605ZM1310 655 1395 655 1390 632 1465 625 1460 480 1580 480V770L1520 800 1465 780 1430 785 1430 810 1380 810 1370 780 1160 735 1150 700 1320 710ZM1400 545 1460 545 1460 590 1400 590Z" />
    </g>
    <g transform={east}>
      <path fill="#c6e4a1" d="M185 40 400 40 405 70 160 138 185 95ZM597 40 622 40 610 115 580 125ZM522 152 603 138 575 220ZM583 232 607 232 607 313 565 313ZM510 960 600 1010 700 1005 840 950 1010 850 1060 845 1210 1010 1210 1100 1170 1060 1130 1020 1135 1005 1070 985 1040 970 1020 990 945 1000 945 1020 840 1045 720 1080 670 1095 600 1040 520 1045 460 1070ZM725 1135 820 1110 830 1150 895 1145 885 1170 820 1216 725 1216ZM1295 850 1460 895 1460 1216 1290 1216 1190 1150 1300 960Z" />
      <path fill="#bcdd99" d="M40 1160 100 1090 260 1145 340 1130 430 1100 400 1150 340 1216 0 1216Z" />
      <path fill="#9ad6f2" d="M335 40H375L350 65ZM1410 1110 1460 1100V1160L1400 1140Z" />
      <path fill="#fbf0d4" d="M910 40 970 40 1000 210 945 210ZM1010 150 1090 130 1070 290 1010 290ZM920 280 1010 275 1005 490 950 490ZM490 290 560 230 550 330 630 330 630 480 540 480 550 570 530 620 560 640 540 700 480 810 460 920 410 910 410 830 320 800 380 750 440 640 420 520 490 480ZM0 640 60 640 110 740 45 790 0 760ZM120 760 200 780 300 830 240 880 360 900 350 1120 330 1120 260 930ZM1075 375 1180 360 1210 410 1275 400 1280 440 1200 470 1310 490 1300 530 1150 530 1000 600 1000 480ZM1435 40 1460 40 1460 220 1435 220ZM1435 280 1460 280 1460 370 1435 370ZM120 1000 130 960 250 965 220 1010ZM570 1110 720 1080 720 1135 610 1165ZM900 1090 980 1100 960 1216 890 1216Z" />
      <path fill="none" stroke="#b9c4a8" strokeWidth="2" d="M1000 850 945 970 900 980M1030 850 1140 980 1175 1100M1300 1090 1460 1010" />
    </g>
    <Streets roads={westRoads} transform={west} />
    <Streets roads={eastRoads} transform={east} />
    <g fill="none" strokeLinejoin="round">
      <path d="M0 445 57 472 124 507 208 555" stroke="#dfdfdd" strokeWidth="11" />
      <path d="M0 445 57 472 124 507 208 555" stroke="#fff" strokeWidth="8" />
      <path d="M1255 200 1226 265 1213 330 1190 402 1146 476 1100 560" stroke="#dfdfdd" strokeWidth="17" />
      <path d="M1255 200 1226 265 1213 330 1190 402 1146 476 1100 560" stroke="#fff" strokeWidth="14" />
      <path d="M1226 265 1213 330 1190 402 1146 476 1100 560" stroke="#e3e3e1" strokeWidth="2" />
      <path d="M417-4 384 90Q377 120 380 150L398 264 412 345 422 460 426 560" stroke="#b4b5ba" strokeWidth="16" />
      <path d="M417-4 384 90Q377 120 380 150L398 264 412 345 422 460 426 560" stroke="#cdced3" strokeWidth="13" />
    </g>
    <circle cx="174" cy="156" r="6" fill="#fff" stroke="#dfdfdd" strokeWidth="2" />
    {streetNames.map(([t, d, size], i) => (
      <g key={t}>
        <path id={`street${i}`} d={d} fill="none" />
        <text fontSize={size || 17} fontWeight={size ? 600 : 500} fill="#4c4c4c" dy="6" {...halo}><textPath href={`#street${i}`}>{t}</textPath></text>
      </g>
    ))}
    <g fill="#3f8446" fontWeight="700" fontSize="21" {...halo}>
      <text x="49" y="12">Grüneburgpark</text>
      <text x="0" y="172">cher</text>
      <text x="1" y="217">rt –</text>
      <text x="0" y="238">garten</text>
      <text x="206" y="509">Rothschildpark</text>
      <text x="453" y="565">Bockenheimer</text>
      <text x="784" y="499" fill="#a63a7d">CineStar</text>
    </g>
    <text x="0" y="445" fontSize="26" fontWeight="600" fill="#66686b" {...halo}>-SÜD</text>
    <ParkBadge x={28} y={4} />
    <ParkBadge x={386} y={501} />
    <ParkBadge x={1232} y={441} />
    <ParkBadge x={626} y={566} />
    <g transform="translate(763 491)">
      <circle r="16.500" fill="#fff" opacity=".8" /><circle r="14.500" fill="#cf52b5" />
      <g transform="translate(-9 -9)"><FaVideo size={18} color="#fff" /></g>
    </g>
    <g fontSize="22" fontWeight="500" fill="#4c5244" textAnchor="middle" {...halo}>
      <text x="34" y="41">0</text><text x="173" y="41">250</text><text x="313" y="41">500</text><text x="466" y="41">750 m</text>
    </g>
    <rect x="36" y="60" width="416" height="16" rx="6" fill="#747b68" />
    <rect x="174" y="62" width="140" height="12" fill="#e0f1c9" />
    <g transform="translate(18 508)"><FaApple size={24} color="#5b5b58" /></g>
    <text x="42" y="532" fontSize="30" fontWeight="500" fill="#5b5b58" {...halo}>Karten</text>
    <text x="162" y="530" fontSize="19" fontWeight="600" fill="#7c7c78" textDecoration="underline" {...halo}>Rechtl. Informationen</text>
    <path d="M624 279c-3-8-8-11-13-15a28 28 0 1 1 26 0c-5 4-10 7-13 15Z" fill="url(#pin)" />
    <circle cx="624" cy="230" r="8.500" fill="#fff" />
    <path d="M621.500 239h5l-.8 17h-3.400Z" fill="#fff" />
    <g transform="translate(1181 487)">
      <circle r="47" fill="#f8faf3" />
      {[0, 22.5, 45, 67.5, 90, 112.5, 135, 157.5, 180, 202.5, 225, 247.5, 270, 292.5, 315, 337.5].map(a => (
        <path key={a} d="M0-40v8" transform={`rotate(${a})`} stroke={a % 90 ? '#d5d8d0' : '#4b4b4b'} strokeWidth="3" />
      ))}
      <path d="M0-42 6-30H-6Z" fill="#ec4b36" />
      <text y="12" fontSize="33" fontWeight="500" fill="#6a6a66" textAnchor="middle">N</text>
    </g>
  </svg>
);

export default function App() {
  return (
    <Desktop>
      <Global />
      <Window>
        <Sidebar>
          <Lights>
            <Light $c="#ed6a5e" aria-label="Schließen" />
            <Light $c="#f5bf4f" aria-label="Minimieren" />
            <Light $c="#61c554" aria-label="Maximieren" />
            <PanelToggle aria-label="Seitenleiste">
              <Icon w={40} h={32} color="#757575"><rect x="1.500" y="1.500" width="37" height="29" rx="4" strokeWidth="2.600" /><path d="M15 2v28" strokeWidth="2.400" /><path d="M6 8h4M6 13h4M6 18h4" strokeWidth="2" /></Icon>
            </PanelToggle>
          </Lights>
          <SideNav>
            <SideGroup items={sideStart} />
            <SideHeading>Kalender</SideHeading>
            <SideHeading>Kontakte</SideHeading>
            <SideGroup items={sideContacts} />
            {['Verkaufschancen', 'Projekte', 'Aufgaben', 'Notizen & E-Mail', 'Formulare', 'Gruppen', 'Berichte'].map(h => <SideHeading key={h}>{h}</SideHeading>)}
            <SideGroup items={sideReports} />
            <SideHeading>Web&amp;Map</SideHeading>
            <SideGroup items={sideWeb} />
          </SideNav>
          <SideFooter>
            <button aria-label="Hinzufügen"><Icon w={22} color="#555"><path d="M11 1v20M1 11h20" strokeWidth="2" /></Icon></button>
            <button aria-label="Kalender"><Icon w={26} h={24} color="#6a6a6a"><rect x="1.500" y="1.500" width="23" height="21" rx="4" strokeWidth="2" /><path d="M2 5h22" strokeWidth="4" /><path d="M11 12h.1M15 12h.1M19 12h.1M7 17h.1M11 17h.1M15 17h.1M19 17h.1" strokeWidth="2.800" /></Icon></button>
          </SideFooter>
        </Sidebar>

        <Main>
          <Toolbar>
            <NewTool $w={324}>
              <Icon w={28}><path d="M14 2v24M2 14h24" strokeWidth="2.600" /></Icon>
              Neue Firma
            </NewTool>
            <Rule />
            <Tool $w={64} aria-label="Mehr"><Icon w={14} h={10}><path d="m2 2 5 5 5-5" /></Icon></Tool>
            <Gap $w={14} />
            <Tool $w={83} $on aria-label="Spalten"><Icon w={40} h={32} color="#3c3c3c"><rect x="1.500" y="1.500" width="37" height="29" rx="4" strokeWidth="2.600" /><path d="M20 2v28" strokeWidth="2.600" /></Icon></Tool>
            <Tool $w={88} aria-label="Tabelle"><Icon w={40} h={32}><rect x="1.500" y="1.500" width="37" height="29" rx="4" strokeWidth="2.600" /><path d="M13.500 2v28M26.500 2v28M2 11h36M2 21h36" strokeWidth="2.600" /></Icon></Tool>
            <Rule />
            <Tool $w={84} aria-label="Diagramm"><Icon w={44} h={34}><rect x="1.500" y="12" width="10" height="20.500" rx="3" strokeWidth="2.600" /><rect x="17" y="7" width="10" height="25.500" rx="3" strokeWidth="2.600" /><rect x="32" y="1.500" width="10" height="31" rx="3" strokeWidth="2.600" /></Icon></Tool>
            <Gap />
            <Tool $w={66} aria-label="iOSXpert">
              <Icon w={30}><path d="M0 1h7v4H0zM0 8h7v9H0z" fill="#6f6f6f" stroke="none" /><path d="M9 7h13c5 0 8 3 8 7v9c0 4-3 7-8 7H8c-5 0-8-3-8-7v-4h7v2c0 2 1 3 3 3h10c2 0 3-1 3-3v-6c0-2-1-3-3-3H9Z" fill="#6f6f6f" stroke="none" /></Icon>
            </Tool>
            <Rule />
            <Tool $w={78} aria-label="Lernen">
              <Icon w={40} h={36}><path d="M20 1 39 10 20 19 1 10Z" fill="#6f6f6f" stroke="none" /><path d="m20 10-12 5v6" stroke="#fcfcfc" strokeWidth="1.400" /><path d="M11 17.500 20 22l14-7v8c-3 6-17 7-23 2Z" fill="#6f6f6f" stroke="none" /><path d="M7.500 14v12" strokeWidth="2" /><rect x="6.500" y="28" width="4" height="7" rx="2" fill="#6f6f6f" stroke="none" /></Icon>
            </Tool>
            <Rule />
            <Tool $w={78} aria-label="Aktionen">
              <Icon w={38} h={38}><path d="M19 2v4M2 19h5M31 19h5M7 7l4 4M31 7l-4 4M7 31l4-4" strokeWidth="2.800" /><path d="m18 18 11 10-5 .5 3 6-3 1.500-3-6-3 3Z" fill="#6f6f6f" stroke="none" /></Icon>
            </Tool>
            <Rule />
            <Tool $w={78} aria-label="Copilot"><Copilot /></Tool>
            <Gap $w={68} />
            <Tool $w={72} aria-label="Anruf">
              <Icon w={34}><path d="M5 3 2 6c-1 11 13 26 23 25 3 0 6-2 6-5l-6-5c-2-1-3 3-5 2-4-2-7-5-8-9 0-2 3-2 2-4l-4-7c-2-2-4-1-5 0Z" strokeWidth="2.400" /><path d="M22 2h10v10M32 2 20 14" strokeWidth="2.600" /></Icon>
            </Tool>
            <Rule />
            <Tool $w={72} aria-label="Neuer Anruf">
              <Icon w={38}><path d="M5 3c-4 5-2 13 3 19s14 12 22 10c3-1 6-3 6-6-2-3-5-5-8-5-2 0-3 3-5 2-4-2-6-5-8-9 0-2 2-2 1-5-2-4-6-10-11-6Z" strokeWidth="2.400" /><PlusBadge x={10} y={28} /></Icon>
            </Tool>
            <Gap $w={58} />
            <Tool $w={74} aria-label="Neue Zeiterfassung">
              <Icon w={32} h={38}><path d="M9 2h22v5h-3c0 6-5 8-5 10s5 5 5 11h3v5H9v-5h3c0-6 5-9 5-11S11 13 11 7H9Z" fill="#6f6f6f" stroke="none" /><path d="m15 9 5 6 5-6Z" fill="#fcfcfc" stroke="none" /><PlusBadge x={11} y={27} /></Icon>
            </Tool>
            <Rule />
            <Tool $w={72} aria-label="Timer">
              <Icon w={36} h={38}><circle cx="18" cy="21" r="15.500" strokeWidth="2.600" /><path d="M18 2v4M31 8l1-1M18 11v10" strokeWidth="2.800" /><circle cx="18" cy="21" r="2.800" fill="#6f6f6f" stroke="none" /></Icon>
            </Tool>
            <Rule />
            <Tool $w={72} aria-label="Umsatz">
              <Icon w={34}><circle cx="17" cy="17" r="15.500" strokeWidth="2.400" /><path d="M22 11c-5-4-10-1-10 6s5 10 10 6M9 15h10M9 19h9" strokeWidth="2" /></Icon>
            </Tool>
            <Gap $w={58} />
            <Tool $w={78} aria-label="Team-Mitteilungen">
              <Icon w={38} h={40}><g fill="#e6954c" stroke="none"><path d="M18 1c2 0 4 1 4 3 6 4 7 10 7 17 1 4 7 6 7 10 0 2-1 2-3 2H3c-2 0-3 0-3-2 0-4 6-6 6-12 0-6 2-12 8-15 0-2 2-3 4-3ZM12 35h12c0 6-12 6-12 0Z" /></g><circle cx="29" cy="6" r="5" fill="#e6954c" stroke="#fcfcfc" strokeWidth="2" /><path d="M19 23c0-13 18-13 18 0Z" fill="#e6954c" stroke="#fcfcfc" strokeWidth="2" /></Icon>
            </Tool>
            <Tool $w={80} aria-label="Mitteilungen">
              <Icon w={32} h={36}><path d="M16 1c2 0 3 1 4 3 6 3 7 8 7 14s4 7 4 10H1c0-3 4-4 4-10S6 7 12 4c1-2 2-3 4-3ZM10 31h12c-1 5-11 5-12 0Z" fill="#e34434" stroke="none" /></Icon>
            </Tool>
            <Gap $w={6} />
            <Search>
              <Icon w={26}><circle cx="11" cy="11" r="9" strokeWidth="2.400" /><path d="m18 18 6.500 6.500" /></Icon>
              <input type="search" placeholder="Daylite durchsuchen" aria-label="Daylite durchsuchen" />
            </Search>
          </Toolbar>

          <Body>
            <ListPane>
              <ListHeader>
                <Picker $size={22} $gap={14}>
                  <select aria-label="Sortierung"><option>Sortiert nach Name</option></select>
                  <UpDown />
                </Picker>
                <button aria-label="Filter"><Icon w={36} h={32} color="#707070"><path d="M1.500 1.500h33L22 16v10l-7 5V16Z" strokeWidth="1.800" /></Icon></button>
              </ListHeader>
              <ListScroll>
                {companies.map(([n, c, color]) => {
                  const on = n === 'Thielmann GmbH';
                  return (
                    <Company key={n} $c={color} $on={on}>
                      <CompanyCard href="#" $on={on}><span>{n}</span>{c && <City>{c}</City>}</CompanyCard>
                    </Company>
                  );
                })}
                <ImportRow><button>+ Kontakte importieren ...</button></ImportRow>
              </ListScroll>
              <Footer $left={24}><span /><span>96 Elemente</span><span /></Footer>
            </ListPane>

            <Detail>
              <DetailHeader>
                <TitleRow>
                  <Title>Thielmann GmbH</Title>
                  <Action><Icon w={26} h={32}><path d="M2 1h14l8 9v21H2Z" fill="#f3f3f3" stroke="#88888c" strokeWidth="2" /><path d="M16 1v9h8" stroke="#88888c" strokeWidth="1.600" /></Icon>Datei hinzufügen</Action>
                  <Action><Icon w={28} h={31}><path d="M1 1h26v29H1Z" fill="#fff" stroke="#8b8b8f" strokeWidth="2" /><path d="M2 14h24M2 18h24M2 22h24M2 26h24" stroke="#d8d8d8" strokeWidth="1.600" /><path d="M1 1h26v8H1Z" fill="#f5c842" stroke="#b8962c" strokeWidth="2" /></Icon>Neue Notiz</Action>
                  <Action><Icon w={30}><circle cx="15" cy="15" r="13.500" fill="#f3f3f6" stroke="#77777b" strokeWidth="2" /><path d="M15 6v10h7" stroke="#444" strokeWidth="1.800" /><path d="m15 16-7 5" stroke="#d8423a" strokeWidth="2" /></Icon>Neuer Termin</Action>
                  <Action><Icon w={30} h={26}><path d="m2 12 4-3 5 6L25 2l4 3-17 19Z" fill="#5fca5c" stroke="#2f9440" strokeWidth="1.500" /></Icon>Neue Folgeaktion</Action>
                  <MoreAction aria-label="Weitere"><Icon w={32} h={8}><g fill="#262626" stroke="none"><circle cx="4" cy="4" r="4" /><circle cx="16" cy="4" r="4" /><circle cx="28" cy="4" r="4" /></g></Icon></MoreAction>
                </TitleRow>
                <Tabs>
                  <Tab $w={321} $icon={78}>
                    <TabIcon><Icon w={50} color="#9a9a9a"><circle cx="25" cy="25" r="24" strokeWidth="1.800" /><path d="M21 20h5v16M19 37h13" stroke="#6e6e6e" strokeLinecap="butt" strokeWidth="3.400" /><circle cx="25" cy="13.500" r="3" fill="#6e6e6e" stroke="none" /></Icon></TabIcon>
                    <TabText>Details &amp; Aktivität<TabSub>Frankfurt</TabSub></TabText>
                  </Tab>
                  <Tab $w={216} $icon={102} $on>
                    <TabIcon><Copilot w={64} h={42} color="#d98543" /></TabIcon><TabText>Copilot</TabText>
                  </Tab>
                  <Tab $w={243} $icon={70}>
                    <TabIcon><Icon w={44} color="#b0b0b0"><circle cx="22" cy="22" r="20.500" strokeWidth="1.500" /><circle cx="22" cy="22" r="7" strokeWidth="1.500" />{[0, 60, 120, 180, 240, 300].map(a => <circle key={a} cx="22" cy="8.500" r="6.500" strokeWidth="1.500" transform={`rotate(${a} 22 22)`} />)}</Icon></TabIcon><TabText>DayliteDocs</TabText>
                  </Tab>
                  <Tab $w={146} $icon={64}>
                    <TabIcon><Compass /></TabIcon><TabText>Web</TabText>
                  </Tab>
                  <Tab $w={178} $icon={60}>
                    <TabIcon><Icon w={48}><circle cx="24" cy="24" r="24" fill="#999" stroke="none" /><path d="M24 24V13M24 24l-10.500-3.500M24 24l10.500-3.500M24 24l-6.500 9M24 24l6.500 9" stroke="#fff" strokeWidth="6" /></Icon></TabIcon><TabText>easybill</TabText>
                  </Tab>
                  <Tab $w={271} $icon={79}>
                    <TabIcon><Icon w={44} color="#8c8c8c"><circle cx="22" cy="22" r="20.500" strokeWidth="2" /><path d="m7 13 15 9 9-6" strokeWidth="2" /><path d="m8 34 7-6 7 2 5-5 12-5" strokeWidth="1.200" /><path d="M25 29h11v9H25Z" fill="#b5b5b5" strokeWidth="1" /></Icon></TabIcon><TabText>Time&amp;Budget</TabText>
                  </Tab>
                </Tabs>
              </DetailHeader>

              <Panes>
                <InfoPane>
                  <InfoScroll>
                    <Hero>
                      <Avatar><Building size={58} /></Avatar>
                      <HeroName>Thielmann GmbH<Icon w={30} color="#777"><circle cx="13" cy="13" r="11" strokeWidth="1.800" /><path d="m21 21 7.500 7" strokeWidth="2.400" /><path d="M8 12h.1M13 12h.1M18 12h.1" strokeWidth="2.400" /></Icon></HeroName>
                    </Hero>
                    <Field $h={44}><Label>schlagworte</Label><Pills><Pill>INTERESSE Seminar</Pill><Pill>KUNDE Beratung</Pill><Pill>Newsletter</Pill><Pill>VIP</Pill></Pills></Field>
                    <Field $h={40}><Label>kategorie</Label><Value><Dot />Kunde</Value></Field>
                    <Field $h={40}><Label>branche</Label><Value>Training / Coaching</Value></Field>
                    <Field $h={40}><Label>typ</Label><Value>2 - 10 Personen</Value></Field>
                    <Field $h={40}><Label>region</Label><Value>Mitte</Value></Field>
                    <Field $top={24}><Label><Disclosure />Zentrale</Label><Value $gap={28}>+49 69 15 05-50<Handset /></Value></Field>
                    <Field><Label><Disclosure />Fax Arbeit</Label><Value $gap={28}>+49 69 15 05-5544<Handset /></Value></Field>
                    <Field $top={26}>
                      <Label><Disclosure />Work</Label>
                      <Values>
                        <Value>Eschersheimer Landstr. 52
                          <Icon w={28} h={28}><path d="M14 27c-3-7-7-11-7-17a7.500 7.500 0 0 1 15 0c0 6-5 10-8 17Z" fill="#cd2f2b" stroke="none" /><circle cx="14.500" cy="9.500" r="3" fill="#fff" stroke="none" /></Icon>
                          <Star size={27} fill="#e2cb63" edge="#e2cb63" />
                        </Value>
                        <Value>60322 Frankfurt</Value>
                        <ShortValue>Deutschland</ShortValue>
                      </Values>
                    </Field>
                    <Field $top={26}><Label><Disclosure />SevDesk</Label><LinkValue $gap={24}><Anchor href="#">https://my.sevdesk.de/#/crm/detail/id/32348012</Anchor><BrowserMark /></LinkValue></Field>
                    <Field><Label><Disclosure />Lexoffice</Label><LinkValue $gap={24}><Anchor href="#">https://app.lexoffice.de/contacts/6162d897-b0a5-4f38-ba09-<br />ec12bf3b47bd</Anchor><BrowserMark /></LinkValue></Field>
                    <Field $top={20}><Label>details</Label><Value>Umfirmiert aus Towers Thielmann GmbH</Value></Field>
                    <Field $top={20}><Label>integrationen</Label><Value $gap={9}><FaSlack size={32} color="#808080" /><Comments /><Folder /></Value></Field>
                    <Field $top={26}><Label>beschreibung</Label><Value>Test</Value></Field>
                    <Field $top={20}><Label>ap marketing</Label><Values><Linked icon={personChip} t="Doris Döring" /></Values></Field>
                    <Field $top={26}><Label>ex-mitarbeiter</Label><Values><Linked icon={personChip} t="Elena Epp" /></Values></Field>
                    <Field $top={26}><Label>geschäftsfü...</Label><Values><Linked icon={personChip} t="Theo Thielmann" /></Values></Field>
                    <Field $top={26}><Label>ap buchhalt...</Label><Values><Linked icon={personChip} t="Ursula Eberhart" /></Values></Field>
                    <Field $top={26}><Label>kunde</Label><Values><Linked icon={<HammerGray />} pre="!! " emoji={<HammerColor />} t="Webseite Thielmann GmbH" /></Values></Field>
                    <Field $top={26}>
                      <Label>projekte</Label>
                      <Values>
                        <Linked icon={<HammerGray />} emoji={<Hourglass w={34} />} t="Recruting Entwicklung" />
                        <Linked icon={<HammerGray />} emoji={<Stop />} t=" Prüfung Brand Hochahus Musterweg 23" />
                        <Linked icon={<HammerGray />} emoji={<Stop />} t="Grünberg ./. Thielmann" />
                        <Linked icon={<HammerGray />} emoji={<Stop />} t="Thielmann ./. Müller" />
                        <Linked icon={<HammerGray />} emoji={<Stop />} t="Wolf ./. Thielmann" />
                        <Linked icon={<HammerGray />} emoji={<Star size={34} />} t="Webseitengestaltung" />
                      </Values>
                    </Field>
                    <Field $top={26}>
                      <Label>verkaufscha...</Label>
                      <Values>
                        <Linked icon={<Dollar />} emoji={<Hourglass w={34} />} t="Anfrage für ein Seminar" />
                        <Linked icon={<Dollar />} emoji={<MoneyBag />} t="Medienberatung Kugler AG" />
                      </Values>
                    </Field>
                  </InfoScroll>
                  <Footer><FootButton>Bearbeiten</FootButton></Footer>
                </InfoPane>

                <SidePane>
                  <PaneTitle $h={82}>
                    <Picker><select aria-label="Bereich"><option>Dateien</option></select><UpDown /></Picker>
                    <button aria-label="Schließen"><Close /></button>
                  </PaneTitle>
                  <FileTools>
                    <button aria-label="Datei hinzufügen"><Icon w={24} h={10} color="#2f73ee"><path d="M2 5h20" strokeWidth="2.400" /></Icon></button>
                    <SortButton aria-label="Sortieren"><Icon w={30} h={26} color="#2f73ee"><path d="M8 25V2M2 8l6-6.500L14 8M22 1v23M16 18l6 6.500 6-6.500" strokeWidth="2.200" /></Icon></SortButton>
                  </FileTools>
                  <FileTable>
                    <tbody>
                      {files.map((f, i) => (
                        <FileRow key={i} $on={f.on} $line={f.line}>
                          <td><Check type="checkbox" aria-label={f.n || 'Angebot'} defaultChecked={f.on} /></td>
                          <NameCell>
                            <FileIcon>{f.dir ? <BlueFolder /> : <DocIcon />}</FileIcon>
                            <FileName $cut={f.cut}>{f.n}</FileName>
                            {f.mark === 'd' && <DollarMark />}
                            {f.mark === 'l' && <LinkMark />}
                          </NameCell>
                          <td>{f.type}</td>
                          <td>{f.size}</td>
                          <td>{f.date}</td>
                        </FileRow>
                      ))}
                    </tbody>
                  </FileTable>
                  <Splitter />
                  <PaneTitle $h={64} $top={18}>
                    <Picker><select aria-label="Bereich unten"><option>Karte</option></select><UpDown /></Picker>
                    <button aria-label="Karte schließen"><Close /></button>
                  </PaneTitle>
                  <MapBox>
                    <CityMap />
                    <Zoom>
                      <button aria-label="Verkleinern"><Icon w={22}><path d="M1 11h20" strokeWidth="2.600" /></Icon></button>
                      <button aria-label="Vergrößern"><Icon w={22}><path d="M1 11h20M11 1v20" strokeWidth="2.600" /></Icon></button>
                    </Zoom>
                  </MapBox>
                  <MapActions><MapButton>Open In Map</MapButton><MapButton>Start Route</MapButton></MapActions>
                  <Footer $left={28}>
                    <FootButton>Bearbeiten</FootButton>
                    <span>Copilot für Firmen</span>
                    <FootHelp aria-label="Hilfe"><Icon w={26} color="#7a7a7a"><circle cx="13" cy="13" r="11.500" strokeWidth="2" /><path d="M9.500 10c0-5 7-4 7-.5 0 2.500-3.500 2.500-3.500 5.500M13 18.500v.1" strokeWidth="2.200" /></Icon></FootHelp>
                  </Footer>
                  <Menu>
                    <MenuItem>Von Datei</MenuItem>
                    <MenuRule />
                    <MenuItem $dim>iPhone von Tristan Maximilian (2)</MenuItem>
                    <MenuItem>Foto aufnehmen</MenuItem>
                    <MenuItem>Dokumente scannen</MenuItem>
                    <MenuItem>Zeichnung hinzufügen</MenuItem>
                  </Menu>
                </SidePane>
              </Panes>
            </Detail>
          </Body>
        </Main>
      </Window>
    </Desktop>
  );
}
